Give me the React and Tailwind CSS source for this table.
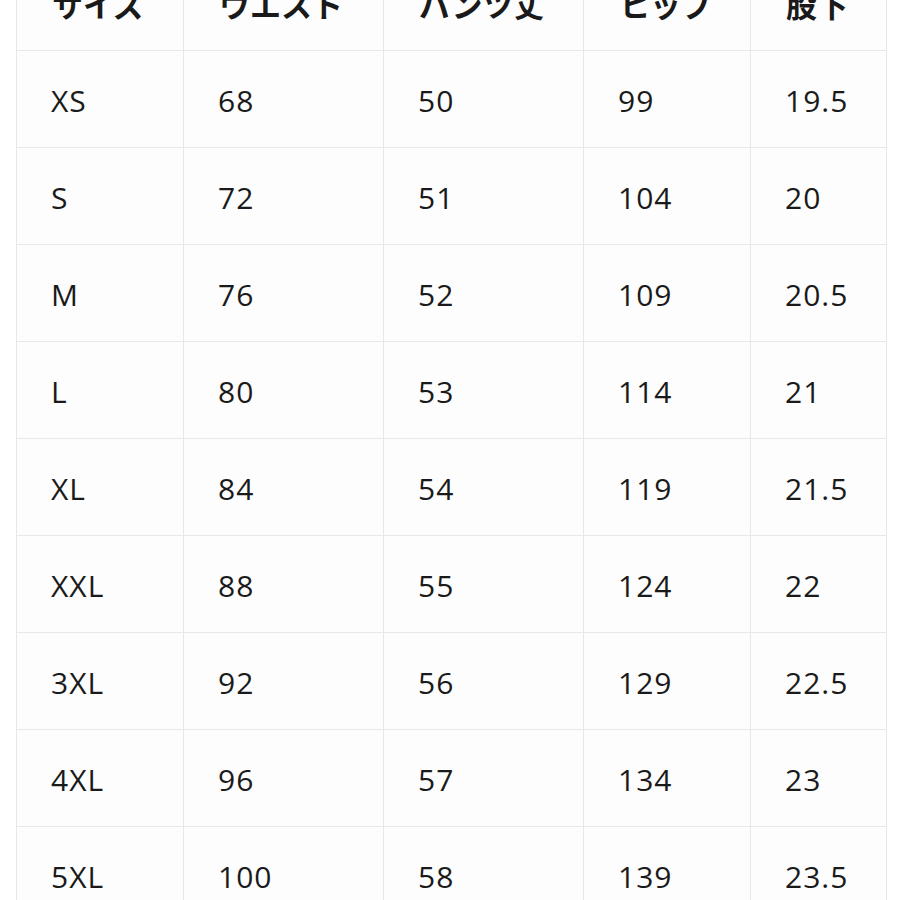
import React from 'react';

const headers = ['サイズ', 'ウエスト', 'パンツ丈', 'ヒップ', '股下'];

const rows = [
  ['XS', '68', '50', '99', '19.5'],
  ['S', '72', '51', '104', '20'],
  ['M', '76', '52', '109', '20.5'],
  ['L', '80', '53', '114', '21'],
  ['XL', '84', '54', '119', '21.5'],
  ['XXL', '88', '55', '124', '22'],
  ['3XL', '92', '56', '129', '22.5'],
  ['4XL', '96', '57', '134', '23'],
  ['5XL', '100', '58', '139', '23.5'],
];

const cols = 'grid grid-cols-[167px_200px_200px_167px_136px]';

const App = () => {
  return (
    <div
      className="w-[900px] h-[900px] overflow-hidden bg-white text-[#1a1a1a]"
      style={{ fontFamily: '"Open Sans", "Noto Sans CJK JP", sans-serif' }}
    >
      <div className="ml-[16px] -mt-[47px] w-[871px] border-l border-r border-[#e8e8e8] bg-[#fdfdfd]">
        <div className={`${cols} h-[98px] border-b border-[#e8e8e8]`}>
          {headers.map((h, i) => (
            <div
              key={h}
              className={`flex items-center pl-[35px] pt-[8px] text-[31px] font-bold ${i < 4 ? 'border-r border-[#e8e8e8]' : ''}`}
            >
              {h}
            </div>
          ))}
        </div>
        {rows.map((r) => (
          <div key={r[0]} className={`${cols} h-[97px] border-b border-[#e8e8e8]`}>
            {r.map((c, i) => (
              <div
                key={i}
                className={`flex items-center pl-[34px] pt-[2px] text-[30px] tracking-[1px] ${i < 4 ? 'border-r border-[#e8e8e8]' : ''}`}
              >
                {c}
              </div>
            ))}
          </div>
        ))}
      </div>
    </div>
  );
};

export default App;
